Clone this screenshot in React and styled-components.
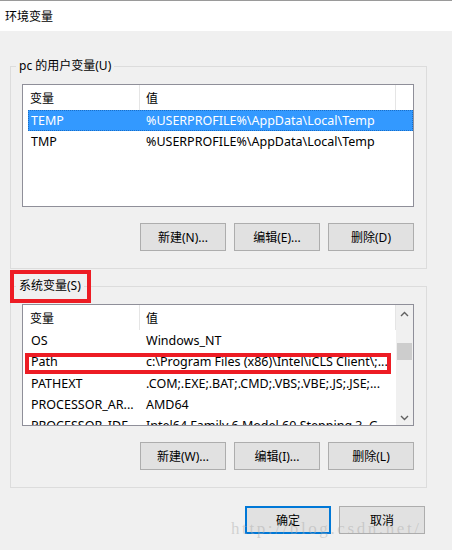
import React from "react";
import styled, { createGlobalStyle } from "styled-components";

const Global = createGlobalStyle`
  html, body { margin: 0; padding: 0; background: #f0f0f0; }
  body { font-family: "Noto Sans", "Noto Sans CJK SC", sans-serif; font-size: 12px; color: #000; }
`;

const Window = styled.div`
  position: relative;
  width: 452px;
  height: 550px;
  box-sizing: border-box;
  border-top: 1px solid #9a9a9a;
  background: #f0f0f0;
  overflow: hidden;
`;

const TitleBar = styled.div`
  height: 30px;
  background: #fff;
  display: flex;
  align-items: center;
  padding-left: 5px;
  padding-bottom: 1px;
  box-sizing: border-box;
  font-size: 12px;
`;

const Content = styled.div`
  padding: 35px 25px 0 10px;
  display: flex;
  flex-direction: column;
`;

const Group = styled.div`
  position: relative;
  border: 1px solid #dcdcdc;
  padding: 17px 12px 17px 11px;
  margin-top: ${(p) => p.$mt || 0}px;
  display: flex;
  flex-direction: column;
  gap: 16px;
`;

const Legend = styled.span`
  position: absolute;
  top: -9px;
  left: 5px;
  padding: 0 3px;
  background: #f0f0f0;
  line-height: 16px;
  white-space: nowrap;
`;

const ListBox = styled.div`
  position: relative;
  height: ${(p) => p.$h}px;
  box-sizing: border-box;
  border: 1px solid #8f8f99;
  background: #fff;
  display: flex;
  overflow: hidden;
`;

const ListInner = styled.div`
  flex: 1;
  display: flex;
  flex-direction: column;
  padding-left: 5px;
  overflow: hidden;
`;

const HeaderRow = styled.div`
  display: grid;
  grid-template-columns: 112px 256px;
  height: 25px;
  flex-shrink: 0;
`;

const HeaderCell = styled.div`
  display: flex;
  align-items: center;
  padding-left: ${(p) => (p.$second ? 6 : 2)}px;
  border-right: 1px solid #e5e5e5;
  font-size: 12px;
`;

const Row = styled.div`
  display: grid;
  grid-template-columns: 112px 256px;
  height: 21.3px;
  flex-shrink: 0;
  align-items: center;
  background: ${(p) => (p.$sel ? "#3399ff" : "transparent")};
  color: ${(p) => (p.$sel ? "#fff" : "#000")};
  outline: ${(p) => (p.$sel ? "1px dotted #1a6fc7" : "none")};
  outline-offset: -1px;
`;

const Cell = styled.div`
  padding-left: ${(p) => (p.$second ? 6 : 3)}px;
  font-size: 12.5px;
  white-space: nowrap;
  overflow: hidden;
`;

const Scrollbar = styled.div`
  width: 17px;
  flex-shrink: 0;
  background: #f0f0f0;
  display: flex;
  flex-direction: column;
  align-items: center;
  justify-content: space-between;
  padding: 6px 0 4px;
  box-sizing: border-box;
`;

const Thumb = styled.div`
  width: 15px;
  height: 17px;
  background: #cdcdcd;
  margin-top: 26px;
`;

const Spacer = styled.div`
  flex: 1;
`;

const ButtonRow = styled.div`
  display: flex;
  justify-content: flex-end;
  gap: 8px;
`;

const Button = styled.button`
  width: 86px;
  height: 28px;
  box-sizing: border-box;
  background: #e1e1e1;
  border: ${(p) => (p.$def ? "2px solid #0078d7" : "1px solid #adadad")};
  font-family: "Noto Sans", "Noto Sans CJK SC", sans-serif;
  font-size: 12px;
  color: #000;
  padding: 0;
  margin: 0;
  display: flex;
  align-items: center;
  justify-content: center;
`;

const FooterRow = styled.div`
  display: flex;
  justify-content: flex-end;
  gap: 8px;
  margin-top: 18px;
  padding-right: 2px;
`;

const RedBox = styled.div`
  position: absolute;
  left: ${(p) => p.$x}px;
  top: ${(p) => p.$y}px;
  width: ${(p) => p.$w}px;
  height: ${(p) => p.$h}px;
  border: 4px solid #ed1c24;
  box-sizing: border-box;
  pointer-events: none;
`;

const Watermark = styled.div`
  position: absolute;
  left: 231px;
  top: 518px;
  font-family: "Liberation Serif", serif;
  font-size: 17px;
  letter-spacing: 2.6px;
  color: rgba(170, 170, 170, 0.45);
  white-space: nowrap;
  pointer-events: none;
`;

const Chevron = ({ up }) => (
  <svg width="9" height="6" viewBox="0 0 9 6">
    <polyline
      points={up ? "1,5 4.5,1.5 8,5" : "1,1 4.5,4.5 8,1"}
      fill="none"
      stroke="#606060"
      strokeWidth="1.4"
    />
  </svg>
);

const userRows = [
  ["TEMP", "%USERPROFILE%\\AppData\\Local\\Temp", true],
  ["TMP", "%USERPROFILE%\\AppData\\Local\\Temp", false],
];

const sysRows = [
  ["OS", "Windows_NT"],
  ["Path", "c:\\Program Files (x86)\\Intel\\iCLS Client\\;..."],
  ["PATHEXT", ".COM;.EXE;.BAT;.CMD;.VBS;.VBE;.JS;.JSE;..."],
  ["PROCESSOR_AR...", "AMD64"],
  ["PROCESSOR_IDE...", "Intel64 Family 6 Model 60 Stepping 3, G..."],
];

function List({ rows, h, scroll }) {
  return (
    <ListBox $h={h}>
      <ListInner>
        <HeaderRow>
          <HeaderCell>变量</HeaderCell>
          <HeaderCell $second>值</HeaderCell>
        </HeaderRow>
        {rows.map(([k, v, sel]) => (
          <Row key={k} $sel={sel}>
            <Cell>{k}</Cell>
            <Cell $second>{v}</Cell>
          </Row>
        ))}
      </ListInner>
      {scroll && (
        <Scrollbar>
          <Chevron up />
          <Thumb />
          <Spacer />
          <Chevron />
        </Scrollbar>
      )}
    </ListBox>
  );
}

export default function App() {
  return (
    <>
      <Global />
      <Window>
        <TitleBar>环境变量</TitleBar>
        <Content>
          <Group>
            <Legend>pc 的用户变量(U)</Legend>
            <List rows={userRows} h={123} />
            <ButtonRow>
              <Button>新建(N)...</Button>
              <Button>编辑(E)...</Button>
              <Button>删除(D)</Button>
            </ButtonRow>
          </Group>
          <Group $mt={17}>
            <Legend>系统变量(S)</Legend>
            <List rows={sysRows} h={122} scroll />
            <ButtonRow>
              <Button>新建(W)...</Button>
              <Button>编辑(I)...</Button>
              <Button>删除(L)</Button>
            </ButtonRow>
          </Group>
          <FooterRow>
            <Button $def>确定</Button>
            <Button>取消</Button>
          </FooterRow>
        </Content>
        <RedBox $x={10} $y={269} $w={81} $h={33} />
        <RedBox $x={25} $y={352} $w={366} $h={21} />
        <Watermark>http://blog.csdn.net/</Watermark>
      </Window>
    </>
  );
}
